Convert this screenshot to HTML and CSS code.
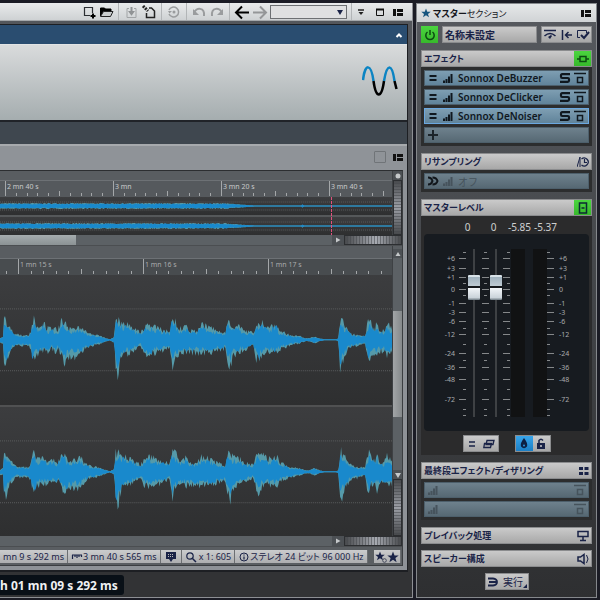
FILE: index.html
```html
<!DOCTYPE html>
<html lang="ja">
<head>
    <meta charset="UTF-8">
    <meta name="viewport" content="width=device-width, initial-scale=1.0">
    <title>Audio Editor</title>
    <link rel="stylesheet" href="styles.css">
</head>
<body>
    <svg class="symbols" aria-hidden="true">
        <symbol id="layout" viewBox="0 0 16 16"><path d="M3 5h3v7H3zM7 5h6v3H7zM7 9h6v3H7z" fill="currentColor"/></symbol>
        <symbol id="bars" viewBox="0 0 12 12"><path d="M1 8.500h2V11H1zM3.500 7h2v4h-2zM6 4.500h2V11H6zM8.500 2h2v9h-2z" fill="currentColor"/></symbol>
        <symbol id="equals" viewBox="0 0 12 12"><path d="M2.500 4h7M2.500 8h7" stroke="currentColor" stroke-width="2"/></symbol>
        <symbol id="solo" viewBox="0 0 12 12"><path d="M11 2.200H3.200Q2 2.200 2 3.400v1.200Q2 6 3.200 6h5.600Q10 6 10 7.200v1.400Q10 9.800 8.800 9.800H1" fill="none" stroke="currentColor" stroke-width="2.200"/></symbol>
        <symbol id="bypass" viewBox="0 0 12 12"><path d="M0 1.500h12M3.500 5.500h5v5h-5z" fill="none" stroke="currentColor" stroke-width="1.500"/></symbol>
        <symbol id="star" viewBox="0 0 12 12"><path d="M6 .5l1.500 3.900 4.200.1-3.300 2.600 1.200 4.100L6 8.800l-3.600 2.400 1.200-4.100L.3 4.500l4.200-.1z" fill="currentColor"/></symbol>
        <symbol id="right" viewBox="0 0 8 8"><path d="M2 1.500L6.500 4 2 6.500z" fill="currentColor"/></symbol>
        <symbol id="up" viewBox="0 0 8 8"><path d="M1.500 6L4 2l2.500 4z" fill="currentColor"/></symbol>
        <symbol id="down" viewBox="0 0 8 8"><path d="M1 2h6L4 7z" fill="currentColor"/></symbol>
    </svg>

    <div class="app">
        <main class="window">
            <div class="toolbar">
                <button class="tool" aria-label="New"><svg viewBox="0 0 16 16"><path d="M12.500 9V3.500h-8v8H10" fill="none" stroke="#2b2e32" stroke-width="1.200"/><path d="M13 9.500v5M10.500 12h5" stroke="#000" stroke-width="2"/></svg></button>
                <button class="tool" aria-label="Open"><svg viewBox="0 0 16 16"><path d="M2.500 12V4h4l1 1H13v2" fill="#000" stroke="#000"/><path d="M2.500 12.500L5.500 7.500H15l-2.500 5z" fill="#c9cccd" stroke="#222"/></svg></button>
                <span class="divider"></span>
                <button class="tool" aria-label="Save"><svg viewBox="0 0 16 16"><path d="M6 4.500H4v9h9v-9h-2" fill="none" stroke="#a1a4a6"/><path d="M8.500 3v6M7 8h3l-1.500 2z" fill="#909395" stroke="#909395" stroke-width="2"/></svg></button>
                <button class="tool" aria-label="Save as"><svg viewBox="0 0 16 16"><path d="M5.500 9v4.500h8V7l-3-3H8" fill="none" stroke="#222" stroke-width="1.500"/><path d="M2 2l5 5" stroke="#222" stroke-width="3" stroke-dasharray="2 1"/></svg></button>
                <span class="divider"></span>
                <button class="tool" aria-label="Revert"><svg viewBox="0 0 16 16"><path d="M3 6a5 5 0 1 1 0 4" fill="none" stroke="#9a9c9e" stroke-width="1.500"/><path d="M2 7h4L3.500 9.500z" fill="#9a9c9e"/><circle cx="8" cy="8" r="1.500" fill="#9a9c9e"/></svg></button>
                <span class="divider"></span>
                <button class="tool" aria-label="Undo"><svg viewBox="0 0 16 16"><path d="M3 9C5 3 14 3 13 12" fill="none" stroke="#9a9c9e" stroke-width="2"/><path d="M2 5v6h6z" fill="#9a9c9e"/></svg></button>
                <button class="tool" aria-label="Redo"><svg viewBox="0 0 16 16"><path d="M13 9C11 3 2 3 3 12" fill="none" stroke="#9a9c9e" stroke-width="2"/><path d="M14 5v6H8z" fill="#9a9c9e"/></svg></button>
                <span class="divider"></span>
                <button class="tool" aria-label="Back"><svg viewBox="0 0 16 16"><path d="M15 8.500H3M8 2.500l-6 6 6 6" fill="none" stroke="#000" stroke-width="2"/></svg></button>
                <button class="tool" aria-label="Forward"><svg viewBox="0 0 16 16"><path d="M1 8.500h12M8 2.500l6 6-6 6" fill="none" stroke="#949698" stroke-width="2"/></svg></button>
                <span class="location"><select aria-label="Location"><option></option></select><svg viewBox="0 0 8 8"><use href="#down"/></svg></span>
                <span class="divider"></span>
                <div class="views">
                    <button class="tool" aria-label="Menu"><svg viewBox="0 0 16 16"><path d="M4 6h6" stroke="#222" stroke-width="1.500"/><path d="M4.500 8h5L7 11z" fill="#222"/></svg></button>
                    <button class="tool" aria-label="Window"><svg viewBox="0 0 16 16"><path d="M4.500 5.500h7v6h-7z" fill="none" stroke="#111"/><path d="M4 5.500h8" stroke="#111" stroke-width="2"/></svg></button>
                    <button class="tool" aria-label="Layout"><svg><use href="#layout"/></svg></button>
                </div>
            </div>

            <section class="document">
                <div class="title-bar"><button class="tool" aria-label="Collapse"><svg viewBox="0 0 16 16"><path d="M5.500 10L8 7.500l2.500 2.500" fill="none" stroke="#fff" stroke-width="2"/></svg></button></div>
                <div class="banner">
                    <svg class="logo" viewBox="0 0 36 30">
                        <path d="M1 14C3 -3 9 -3 11.500 15M22 15C25-3 30-3 32.500 15" fill="none" stroke="#0b84c3" stroke-width="2.500"/>
                        <path d="M11.500 15c2.500 18 8 18 10.500 0M32.500 15l2 8" fill="none" stroke="#000" stroke-width="2.500"/>
                    </svg>
                </div>
                <div class="tab-bar"></div>
                <div class="pane-bar">
                    <input type="checkbox" aria-label="Lock pane">
                    <button class="tool" aria-label="Pane layout"><svg><use href="#layout"/></svg></button>
                </div>

                <div class="editor">
                    <div class="overview">
                        <div class="tracks">
                            <div class="band"></div>
                            <svg class="ruler" data-start="5" data-step="108" data-labels="2 mn 40 s,3 mn,3 mn 20 s,3 mn 40 s"></svg>
                            <div class="lanes">
                                <svg class="lane" data-wave="overview" viewBox="0 0 393 18" preserveAspectRatio="none"></svg>
                                <svg class="lane" data-wave="overview" viewBox="0 0 393 18" preserveAspectRatio="none"></svg>
                                <span class="playhead"></span>
                            </div>
                        </div>
                        <div class="side">
                            <button class="arrow" aria-label="Reset zoom"><svg viewBox="0 0 8 8"><circle cx="4" cy="4" r="2.500" fill="currentColor"/></svg></button>
                            <div class="wheel wheel-v"></div>
                        </div>
                    </div>
                    <div class="scroll-row">
                        <div class="track"><div class="thumb"></div></div>
                        <button class="arrow" aria-label="Scroll right"><svg><use href="#right"/></svg></button>
                        <div class="wheel wheel-h"></div>
                    </div>
                    <div class="detail">
                        <div class="tracks">
                            <div class="band"></div>
                            <svg class="ruler" data-start="18" data-step="125" data-labels="1 mn 15 s,1 mn 16 s,1 mn 17 s"></svg>
                            <svg class="lane" data-wave="detail" viewBox="0 0 393 130" preserveAspectRatio="none"></svg>
                            <svg class="lane" data-wave="detail" viewBox="0 0 393 130" preserveAspectRatio="none"></svg>
                        </div>
                        <div class="side">
                            <button class="arrow" aria-label="Scroll up"><svg><use href="#up"/></svg></button>
                            <div class="track track-v"><div class="thumb"></div></div>
                            <button class="arrow" aria-label="Scroll down"><svg><use href="#down"/></svg></button>
                            <div class="wheel wheel-v"></div>
                        </div>
                    </div>
                    <div class="scroll-row">
                        <div class="track"></div>
                        <button class="arrow" aria-label="Scroll right"><svg><use href="#right"/></svg></button>
                        <div class="wheel wheel-h"></div>
                    </div>
                    <div class="status">
                        <span class="cell cell-cursor">mn 9 s 292 ms</span>
                        <span class="cell cell-length"><svg viewBox="0 0 12 12"><path d="M1 4h10M1.500 4v4M4 4v2M6 4v3M8 4v2M10.500 4v2" stroke="#1a2347" stroke-width="1.200"/></svg>3 mn 40 s 565 ms</span>
                        <span class="cell cell-marker"><svg viewBox="0 0 12 12"><path d="M1 1h10v7H8l-2 3-2-3H1z" fill="#1a2347"/><path d="M3 3.500h6M3 5.500h6" stroke="#bbb" stroke-dasharray="1 1"/></svg></span>
                        <span class="cell cell-zoom"><svg viewBox="0 0 12 12"><circle cx="5" cy="5" r="3.200" fill="none" stroke="#1a2347" stroke-width="1.200"/><path d="M7.500 7.500L11 11" stroke="#1a2347" stroke-width="1.500"/></svg>x 1: 605</span>
                        <span class="cell cell-format"><svg viewBox="0 0 12 12"><circle cx="6" cy="6" r="4" fill="none" stroke="#1a2347"/><path d="M6 3.500v1M6 5.500v3" stroke="#1a2347" stroke-width="1.200"/></svg>ステレオ 24 ビット 96 000 Hz</span>
                        <span class="cell cell-stars"><svg viewBox="0 0 12 12"><use href="#star" width="10" height="10"/><circle cx="9.500" cy="9.500" r="1.800" fill="#bbb" stroke="#444a5c"/></svg><svg><use href="#star"/></svg></span>
                    </div>
                </div>
            </section>

            <footer class="footer"><output class="clock">h 01 mn 09 s 292 ms</output></footer>
        </main>

        <aside class="master">
            <header class="master-title">
                <svg class="title-star"><use href="#star"/></svg>
                <h1>マスター<span>セクション</span></h1>
                <button class="tool" aria-label="Layout"><svg><use href="#layout"/></svg></button>
            </header>
            <div class="master-body">
                <div class="preset">
                    <button class="square on" aria-label="Power"><svg viewBox="0 0 12 12"><path d="M3.500 3a4.200 4.200 0 1 0 5 0M6 1v5" fill="none" stroke="#0c4b12" stroke-width="1.500"/></svg></button>
                    <button class="preset-name">名称未設定</button>
                    <div class="preset-tools">
                        <button aria-label="Bypass all"><svg viewBox="0 0 14 12"><path d="M1 1.500h12M1.500 7Q7 2 12.500 7" fill="none" stroke="#1a2347" stroke-width="1.500"/><path d="M5 8l3-2 1 1-2 3z" fill="#1a2347"/></svg></button>
                        <button aria-label="Reset"><svg viewBox="0 0 14 12"><path d="M2.500 1v10M12 6H6M8.500 3L5.500 6l3 3" fill="none" stroke="#1a2347" stroke-width="1.500"/></svg></button>
                        <button aria-label="Apply"><svg viewBox="0 0 14 12"><path d="M4 8.500H1.500v-7h9V4" fill="none" stroke="#1a2347"/><path d="M5 6l3 3 5-6" fill="none" stroke="#1a2347" stroke-width="2"/></svg></button>
                    </div>
                </div>

                <section class="group">
                    <h2>エフェクト<button class="square on" aria-label="Effects on"><svg viewBox="0 0 12 12"><path d="M0 6h3M9 6h3M3 3.500h6v5H3z" fill="none" stroke="#0c4b12" stroke-width="1.500"/></svg></button></h2>
                    <div class="slots">
                        <button class="slot used"><svg><use href="#equals"/></svg><svg><use href="#bars"/></svg><span>Sonnox DeBuzzer</span><svg><use href="#solo"/></svg><svg><use href="#bypass"/></svg></button>
                        <button class="slot used"><svg><use href="#equals"/></svg><svg><use href="#bars"/></svg><span>Sonnox DeClicker</span><svg><use href="#solo"/></svg><svg><use href="#bypass"/></svg></button>
                        <button class="slot used selected"><svg><use href="#equals"/></svg><svg><use href="#bars"/></svg><span>Sonnox DeNoiser</span><svg><use href="#solo"/></svg><svg><use href="#bypass"/></svg></button>
                        <button class="slot" aria-label="Add effect"><svg viewBox="0 0 12 12"><path d="M6 1v10M1 6h10" stroke="#1c242a" stroke-width="2"/></svg></button>
                    </div>
                </section>

                <section class="group">
                    <h2>リサンプリング<svg class="mark" viewBox="0 0 12 12"><path d="M0 11L3 1v10" fill="none" stroke="#1a2347"/><path d="M4.500 3a4 4 0 1 1 0 6M7.500 3v3.500H10" fill="none" stroke="#1a2347" stroke-width="1.200"/></svg></h2>
                    <div class="slots">
                        <button class="slot off"><svg viewBox="0 0 12 12"><path d="M1 2.500q3.500 0 4.500 3.500-1 3.500-4.500 3.500M5.500 2.500q4 0 5 3.500-1 3.500-5 3.500" fill="none" stroke="#11161b" stroke-width="2"/></svg><svg><use href="#bars"/></svg><span>オフ</span></button>
                    </div>
                </section>

                <section class="group">
                    <h2>マスターレベル<button class="square on" aria-label="Level on"><svg viewBox="0 0 12 12"><path d="M2.500 1h7v10h-7z" fill="none" stroke="#0b2a33" stroke-width="1.500"/><path d="M4.500 6h3" stroke="#0b2a33" stroke-width="1.500"/></svg></button></h2>
                    <div class="level">
                        <div class="readout"><span>0</span><span>0</span><span>-5.85</span><span>-5.37</span></div>
                        <div class="faders">
                            <svg class="scale" data-scale="labels" data-anchor="end"></svg>
                            <svg class="scale" data-scale="ticks" data-anchor="end"></svg>
                            <input class="fader" type="range" min="0" max="100" value="82" aria-label="Left level">
                            <svg class="scale" data-scale="ticks" data-anchor="middle"></svg>
                            <input class="fader" type="range" min="0" max="100" value="82" aria-label="Right level">
                            <svg class="scale" data-scale="ticks" data-anchor="end"></svg>
                            <div class="meters"><span></span><span></span></div>
                            <svg class="scale" data-scale="ticks" data-anchor="start"></svg>
                            <svg class="scale" data-scale="labels" data-anchor="start"></svg>
                        </div>
                        <div class="switches">
                            <div class="pair">
                                <button aria-label="Link channels"><svg viewBox="0 0 12 12"><path d="M3 4h6M3 8h6" stroke="#1a2347" stroke-width="1.500"/></svg></button>
                                <button aria-label="Link faders"><svg viewBox="0 0 12 12"><path d="M4 2.500h7l-1 4H3zM1.500 5.500h7l-1 4H.8z" fill="none" stroke="#1a2347" stroke-width="1.300"/></svg></button>
                            </div>
                            <div class="pair">
                                <button class="blue" aria-label="Monitor"><svg viewBox="0 0 12 12"><path d="M6 0Q10 5 9 8.500Q6 12 3 8.500Q2 5 6 0z" fill="#0d2144"/><circle cx="6" cy="7.500" r="1" fill="#2a93dc"/></svg></button>
                                <button aria-label="Unlock"><svg viewBox="0 0 12 12"><path d="M2 5h8v6H2z" fill="#1a2347"/><path d="M4 5V2.500Q6 0 8 2.500" fill="none" stroke="#1a2347" stroke-width="1.500"/><path d="M6 7v2" stroke="#ccc" stroke-width="1.500"/></svg></button>
                            </div>
                        </div>
                    </div>
                </section>

                <section class="group">
                    <h2>最終段エフェクト/ディザリング<svg class="mark" viewBox="0 0 12 12"><path d="M2 2h4v3H2zM7.500 2h4v3h-4zM2 7h4v3H2zM7.500 7h4v3h-4z" fill="#1a2347"/></svg></h2>
                    <div class="slots">
                        <button class="slot off" aria-label="Final slot 1"><svg><use href="#bars"/></svg><span></span><svg><use href="#bypass"/></svg></button>
                        <button class="slot off" aria-label="Final slot 2"><svg><use href="#bars"/></svg><span></span><svg><use href="#bypass"/></svg></button>
                    </div>
                </section>

                <section class="group closed">
                    <h2>プレイバック処理<svg class="mark" viewBox="0 0 12 12"><path d="M1 1.500h10v5H1zM6 7v3M3 10.500h6" fill="none" stroke="#1a2347" stroke-width="1.500"/></svg></h2>
                </section>
                <section class="group closed">
                    <h2>スピーカー構成<svg class="mark" viewBox="0 0 12 12"><path d="M1 4h2.500L7 1.500v9L3.500 8H1z" fill="none" stroke="#1a2347" stroke-width="1.500"/><path d="M9.500 2Q12.500 6 9.500 10" fill="none" stroke="#1a2347"/></svg></h2>
                </section>

                <button class="render"><svg viewBox="0 0 12 12"><path d="M1 2.500h5Q10 3 10 6T6 9.500H1M2 6h7" fill="none" stroke="#1a2347" stroke-width="1.800"/></svg>実行<svg class="corner" viewBox="0 0 4 4"><path d="M4 0v4H0z" fill="#1a2347"/></svg></button>
            </div>
        </aside>
    </div>
    <script src="script.js"></script>
</body>
</html>
```
FILE: styles.css
```css
* {
    box-sizing: border-box;
}

body {
    margin: 0;
    background: #1b1c25;
    color: #1a2347;
    font-family: "Noto Sans", "Noto Sans CJK JP", sans-serif;
    font-size: 10px;
}

button {
    display: flex;
    align-items: center;
    justify-content: center;
    margin: 0;
    padding: 0;
    border: none;
    background: none;
    color: inherit;
    font: inherit;
}

svg {
    display: block;
    flex: none;
    width: 12px;
    height: 12px;
}

.symbols {
    display: none;
}

.app {
    display: grid;
    grid-template-columns: minmax(0, 1fr) 181px;
    gap: 3px;
    min-height: 100vh;
    padding: 3px 3px 3px 0;
}

.window {
    display: flex;
    flex-direction: column;
    min-width: 0;
    border-right: 1px solid #8d8f94;
    border-bottom: 1px solid #8d8f94;
    background: linear-gradient(#55585d, #303133);
}

/* toolbar */
.toolbar {
    display: flex;
    align-items: center;
    justify-content: flex-end;
    gap: 2px;
    height: 18px;
    padding-right: 6px;
    background: linear-gradient(#e9ebec, #ced1d3);
    border-bottom: 1px solid #a5a8ab;
}

.tool {
    color: #111;
}

.tool svg {
    width: 16px;
    height: 16px;
}

.divider {
    width: 1px;
    height: 17px;
    margin: 0 2px;
    background: #b2b5b7;
}

.views {
    display: flex;
    gap: 2px;
    margin-left: -2px;
}

.location {
    display: flex;
    position: relative;
    width: 77px;
    height: 14px;
}

.location select {
    width: 100%;
    border: 1px solid #6d7073;
    border-radius: 0;
    background: #dfe0e1;
    appearance: none;
}

.location svg {
    position: absolute;
    top: 3px;
    right: 3px;
    width: 8px;
    height: 8px;
}

/* document */
.document {
    display: flex;
    flex: 1;
    flex-direction: column;
    margin: 3px 4px 0 0;
    border-top: 1px solid #1d1f23;
    border-right: 1px solid #1d1f23;
    border-bottom: 2px solid #1d1f23;
    background: #8e9297;
}

.title-bar {
    display: flex;
    align-items: center;
    justify-content: flex-end;
    height: 19px;
    background: #2a4d70;
}

.banner {
    display: flex;
    align-items: center;
    justify-content: flex-end;
    height: 78px;
    padding: 0 9px 3px 0;
    border-top: 1px solid #e2e4e5;
    border-bottom: 2px solid #202328;
    background: linear-gradient(#d9dbdc, #a5adaf);
}

.logo {
    width: 36px;
    height: 30px;
}

.tab-bar {
    height: 22px;
    background: #3f474f;
}

.pane-bar {
    display: flex;
    align-items: center;
    justify-content: flex-end;
    gap: 4px;
    height: 26px;
    padding: 0 1px 3px 0;
    border-top: 2px solid #a7aaad;
    background: #8f9398;
}

.pane-bar input {
    width: 12px;
    height: 12px;
    margin: 0;
    border: 1px solid #707478;
    border-radius: 1px;
    appearance: none;
}

.editor {
    display: flex;
    flex: 1;
    flex-direction: column;
    margin: 0 4px 4px 0;
    border-top: 1px solid #2c2e31;
    border-right: 1px solid #3b3e41;
    border-bottom: 1px solid #3b3e41;
    background: #5a5e62;
}

.overview,
.detail {
    display: grid;
    grid-template-columns: minmax(0, 1fr) 10px;
}

.overview {
    height: 64px;
}

.detail {
    flex: 1;
}

.tracks {
    display: flex;
    flex-direction: column;
    min-width: 0;
}

.band {
    height: 10px;
    background: #595d61;
    border-bottom: 1px solid #6d7175;
}

.detail .band {
    height: 13px;
}

.ruler {
    width: 100%;
    height: 16px;
    background: #55595d;
    color: #c8cacb;
    font-size: 7px;
}

.detail .ruler {
    background: #484c4f;
    color: #a9abac;
}

.lanes {
    display: flex;
    flex: 1;
    flex-direction: column;
    gap: 2px;
    position: relative;
    background: #55585a;
}

.lane {
    flex: 1;
    width: 100%;
    height: auto;
    min-height: 0;
    background: linear-gradient(#3c3d3f, #2e2f30);
}

.detail .lane + .lane {
    border-top: 2px solid #505152;
}

.playhead {
    position: absolute;
    top: 0;
    bottom: 0;
    left: 84.5%;
    width: 1px;
    background: repeating-linear-gradient(#e2507c 0 3px, transparent 3px 4px);
}

.side {
    display: flex;
    flex-direction: column;
    border-left: 1px solid #3e4144;
}

.detail .side {
    padding-top: 3px;
}

.arrow {
    flex: none;
    color: #c5c8ca;
    background: #4c5054;
}

.arrow svg {
    width: 8px;
    height: 8px;
}

.side .arrow {
    height: 9px;
}

.scroll-row .arrow {
    width: 12px;
}

.wheel {
    border: 1px solid #2c2e31;
}

.wheel-v {
    flex: 1;
    background:
        repeating-linear-gradient(transparent 0 2px, #44474b88 2px 3px),
        linear-gradient(#484a4d, #9b9ea5 50%, #484a4d);
}

.detail .wheel-v {
    flex: 0 0 57px;
}

.wheel-h {
    width: 58px;
    background:
        repeating-linear-gradient(90deg, transparent 0 2px, #44474b88 2px 3px),
        linear-gradient(90deg, #484a4d, #a8abb2 55%, #484a4d);
}

.scroll-row {
    display: flex;
    height: 11px;
    border-bottom: 1px solid #4b4e51;
}

.track {
    display: flex;
    flex: 1;
    background: #5c6165;
}

.thumb {
    width: 23%;
    background: linear-gradient(#a5acae, #8b9294);
}

.track-v {
    flex-direction: column;
}

.track-v::before,
.track-v::after {
    content: "";
    flex: 1;
}

.track-v .thumb {
    flex: 2;
    width: 100%;
    background: linear-gradient(90deg, #a2a5a7, #85898b);
}

/* status */
.status {
    display: flex;
    height: 18px;
    padding: 3px 1px 2px 0;
    font-size: 9px;
}

.cell {
    display: flex;
    align-items: center;
    justify-content: space-between;
    padding: 0 3px;
    border-right: 1px solid #6c6f72;
    background: linear-gradient(#cbcccd, #adaeb0);
    line-height: 13px;
    white-space: nowrap;
}

.cell-cursor {
    flex: 1;
    justify-content: flex-end;
}

.cell-length {
    width: 94px;
}

.cell-marker {
    width: 22px;
    justify-content: center;
}

.cell-zoom {
    width: 54px;
}

.cell-format {
    width: 134px;
    font-feature-settings: "palt";
}

.cell-stars {
    width: 28px;
    margin-left: 6px;
    padding: 0 1px;
}

.footer {
    height: 25px;
    padding-top: 3px;
    background: #323335;
}

.clock {
    display: inline-block;
    height: 20px;
    padding: 0 6px 0 0;
    border-radius: 0 3px 3px 0;
    background: #091017;
    color: #f0f1f2;
    font-size: 12px;
    font-weight: bold;
    line-height: 21px;
}

/* master section */
.master {
    display: flex;
    flex-direction: column;
    border: 1px solid #85888c;
    background: linear-gradient(#575a5f, #2e2f31);
}

.master-title {
    display: flex;
    align-items: center;
    height: 18px;
    padding: 0 2px 0 4px;
    background: linear-gradient(#e6e8e9, #d0d3d5);
}

.title-star {
    width: 10px;
    height: 10px;
    margin-right: 2px;
    color: #17557e;
}

h1,
h2 {
    margin: 0;
    font-feature-settings: "palt";
}

h1 {
    flex: 1;
    color: #15161c;
    font-size: 9px;
}

h1 span {
    font-weight: normal;
}

.master-body {
    display: flex;
    flex: 1;
    flex-direction: column;
    padding: 4px 4px 0;
}

.preset {
    display: flex;
    gap: 4px;
    height: 17px;
    margin-bottom: 7px;
}

.square {
    width: 17px;
    height: 17px;
}

.on {
    background: linear-gradient(#4bd53f, #37b92b);
}

.preset-name,
.preset-tools,
h2,
.pair,
.render {
    border: 1px solid #8b8c8e;
    background: linear-gradient(#cacaca, #a8a8a8);
}

.preset-name {
    flex: 1;
    justify-content: flex-start;
    padding-left: 2px;
    font-weight: bold;
}

.preset-tools {
    display: flex;
    align-items: center;
    justify-content: space-between;
    width: 51px;
    padding: 0 1px;
}

.preset-tools svg {
    width: 14px;
}

.group {
    margin-bottom: 7px;
}

h2 {
    display: flex;
    align-items: center;
    justify-content: space-between;
    height: 17px;
    padding-left: 2px;
    font-size: 9px;
}

h2 .on {
    height: 15px;
}

.mark {
    margin-right: 2px;
}

.slots {
    display: flex;
    flex-direction: column;
    gap: 3px;
    padding: 3px;
    background: #2c2d2e;
}

.slot {
    justify-content: flex-start;
    gap: 3px;
    height: 16px;
    padding: 0 2px;
    border: 1px solid #4d5f6b;
    background: linear-gradient(#6e818d, #566873);
    color: #1c242a;
}

.slot span {
    flex: 1;
    padding-left: 1px;
    text-align: left;
}

.slot.used {
    background: linear-gradient(#7e9eb2, #60839a);
    color: #10181f;
    font-weight: 600;
}

.slot.selected {
    border-color: #6ba8e0;
}

.slot.off {
    color: #46535c;
}

.level {
    height: 239px;
    padding: 0 3px;
    background: #2b2b2c;
}

.readout {
    display: grid;
    grid-template-columns: 26px 26px 26px 26px;
    justify-content: center;
    height: 18px;
    padding-top: 4px;
    color: #cfd0d1;
    line-height: 14px;
    text-align: center;
    white-space: nowrap;
}

.faders {
    display: flex;
    justify-content: center;
    height: 197px;
    padding-top: 15px;
    border-radius: 4px;
    background: #171b20;
}

.scale {
    width: 8px;
    height: 170px;
    color: #a9abad;
    font-size: 7px;
}

.scale[data-scale="labels"] {
    width: 24px;
}

.fader {
    width: 14px;
    height: 168px;
    margin: 0;
    background: linear-gradient(#3e4144, #3e4144) center / 2px 100% no-repeat;
    writing-mode: vertical-lr;
    direction: rtl;
    appearance: none;
}

.fader::-webkit-slider-thumb {
    width: 12px;
    height: 25px;
    border: none;
    border-radius: 1px;
    background: linear-gradient(#d8e2e8 0 8%, #a1b3bf 10%, #bfcbd3 45%, #15181c 46% 52%, #f1f5f8 53%, #cbd4da 90%, #6e7a82);
    appearance: none;
}

.meters {
    display: flex;
    gap: 8px;
}

.meters span {
    width: 14px;
    height: 168px;
    background: #111213;
}

.switches {
    display: flex;
    justify-content: center;
    gap: 16px;
    padding-top: 4px;
}

.pair {
    display: flex;
    height: 17px;
}

.pair button {
    width: 17px;
}

.pair .blue {
    background: linear-gradient(#38a5ea, #1b7fc6);
}

.closed {
    margin-bottom: 6px;
}

.render {
    position: relative;
    align-self: center;
    gap: 4px;
    width: 44px;
    height: 17px;
    padding-right: 3px;
}

.render .corner {
    position: absolute;
    right: 1px;
    bottom: 1px;
    width: 4px;
    height: 4px;
}
```
FILE: script.js
```javascript
const NS = 'http://www.w3.org/2000/svg';

function add(parent, name, attrs, text) {
    const node = document.createElementNS(NS, name);
    for (const key in attrs) node.setAttribute(key, attrs[key]);
    if (text) node.textContent = text;
    parent.appendChild(node);
}

// [x, amplitude above centre, amplitude below centre]
const detail = [
    [0, 1, 2], [3, 3, 3], [4, 18, 22], [5, 19, 25], [7, 15, 20], [10, 11, 11], [13, 7, 8], [16, 6, 4], [20, 4, 5],
    [29, 4, 5], [31, 8, 8], [32, 18, 18], [34, 19, 22], [37, 12, 15], [40, 14, 12], [43, 16, 11], [47, 11, 12],
    [52, 10, 8], [56, 10, 11], [58, 9, 7], [60, 14, 12], [62, 17, 15], [65, 16, 22], [68, 10, 18], [72, 10, 14],
    [74, 12, 16], [78, 12, 15], [82, 13, 13], [84, 9, 10], [90, 5, 6], [98, 4, 4], [104, 2, 2], [110, 0, 0],
    [114, 2, 2], [115, 8, 10], [116, 19, 28], [118, 19, 33], [120, 17, 24], [122, 17, 15], [127, 15, 13],
    [130, 12, 12], [135, 10, 9], [141, 6, 5], [145, 13, 13], [150, 14, 15], [155, 12, 12], [160, 10, 11],
    [168, 8, 8], [170, 7, 6], [172, 19, 20], [173, 18, 25], [176, 17, 15], [180, 10, 13], [185, 12, 12],
    [187, 16, 14], [190, 8, 12], [197, 8, 12], [202, 14, 13], [210, 12, 12], [218, 8, 10], [226, 6, 8],
    [228, 19, 18], [229, 19, 22], [231, 17, 26], [234, 13, 15], [238, 14, 12], [245, 8, 9], [254, 6, 5],
    [257, 17, 18], [260, 14, 20], [263, 18, 13], [268, 11, 12], [274, 14, 12], [278, 14, 12], [280, 8, 9],
    [285, 7, 7], [290, 4, 5], [300, 3, 3], [306, 1, 1], [310, 1, 1], [315, 3, 3], [320, 1, 1], [325, 0, 0],
    [337, 0, 0], [339, 1, 1], [340, 8, 10], [341, 17, 25], [342, 19, 27], [344, 16, 20], [348, 10, 11],
    [353, 5, 7], [360, 4, 5], [366, 4, 3], [368, 14, 15], [370, 18, 22], [372, 15, 13], [376, 10, 12],
    [378, 17, 17], [380, 9, 11], [385, 8, 10], [388, 15, 14], [393, 10, 11]
];
const overview = [[0, 2, 2], [225, 2, 2], [240, 1, 1], [256, 0, 0], [302, 0, 0], [303, 1, 1], [305, 0, 0], [393, 0, 0]];

let seed = 7;
function random() {
    seed = (seed * 16807) % 2147483647;
    return seed / 2147483647;
}

function at(points, x, side) {
    let i = 1;
    while (i < points.length - 1 && points[i][0] < x) i++;
    const a = points[i - 1];
    const b = points[i];
    return a[side] + (b[side] - a[side]) * (x - a[0]) / (b[0] - a[0]);
}

function shape(points, mid, base, spread) {
    const top = [];
    const bottom = [];
    for (let x = 0; x <= 393; x++) {
        top.push(x + ',' + (mid - 0.5 - at(points, x, 1) * (base + random() * spread)));
        bottom.unshift(x + ',' + (mid + 0.5 + at(points, x, 2) * (base + random() * spread)));
    }
    return top.concat(bottom).join(' ');
}

document.querySelectorAll('[data-wave]').forEach(function (svg) {
    const isDetail = svg.dataset.wave === 'detail';
    const points = isDetail ? detail : overview;
    const mid = isDetail ? 65 : 9;
    const guide = isDetail ? 31 : 4;
    [mid - guide, mid + guide].forEach(function (y) {
        add(svg, 'path', { d: `M0 ${y}h393`, stroke: '#5b5d5e', 'stroke-dasharray': '1 1' });
    });
    add(svg, 'polygon', { points: shape(points, mid, 0.7, 0.6), fill: '#559aa9' });
    add(svg, 'polygon', { points: shape(points, mid, 0.5, 0.5), fill: '#1989cc' });
});

document.querySelectorAll('.ruler').forEach(function (svg) {
    const start = Number(svg.dataset.start);
    const step = Number(svg.dataset.step);
    for (let i = -9; i < 50; i++) {
        const x = Math.round(start + i * step / 10);
        const height = i % 10 === 0 ? 15 : i % 5 === 0 ? 5 : 3;
        add(svg, 'rect', { x: x, y: 15 - height, width: 1, height: height, fill: '#a4a7a9' });
    }
    svg.dataset.labels.split(',').forEach(function (label, i) {
        add(svg, 'text', { x: start + i * step + 2, y: 8, fill: 'currentColor' }, label);
    });
});

// [y, label]; rows without a label are short ticks
const marks = [
    [3], [9, '+6'], [19, '+3'], [28, '+1'], [34], [40, '0'], [46], [54, '-1'], [63, '-3'], [72, '-6'], [79],
    [85, '-12'], [95], [104, '-24'], [111], [118, '-36'], [130, '-48'], [140], [150, '-72'], [160], [166]
];

document.querySelectorAll('.scale').forEach(function (svg) {
    const anchor = svg.dataset.anchor;
    marks.forEach(function ([y, label]) {
        if (svg.dataset.scale === 'ticks') {
            const width = label ? 7 : 3;
            const x = anchor === 'end' ? 7 - width : anchor === 'middle' ? (label ? 1 : 3) : 0;
            add(svg, 'rect', { x: x, y: y, width: width, height: 1, fill: '#85888a' });
        } else if (label) {
            add(svg, 'text', { x: anchor === 'end' ? 20 : 4, y: y + 3, 'text-anchor': anchor, fill: 'currentColor' }, label);
        }
    });
});
```
